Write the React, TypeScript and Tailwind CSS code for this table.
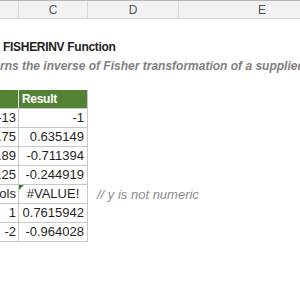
import React from "react";

const font = { fontFamily: '"Liberation Sans", Arial, sans-serif' };

const rows: { b: string; c: string; center?: boolean; err?: boolean; note?: string }[] = [
  { b: "-13", c: "-1" },
  { b: "0.75", c: "0.635149" },
  { b: "-0.89", c: "-0.711394" },
  { b: "-0.25", c: "-0.244919" },
  { b: "symbols", c: "#VALUE!", center: true, err: true, note: "// y is not numeric" },
  { b: "1", c: "0.7615942" },
  { b: "-2", c: "-0.964028" },
];

export default function App() {
  return (
    <div className="w-[300px] h-[300px] overflow-hidden bg-white text-[#1f1f1f]" style={font}>
      {/* column header */}
      <div className="flex h-[19px] bg-[#f2f2f2] border-t border-b border-t-[#b8b8b8] border-b-[#d4d4d4] box-border text-[12px] text-[#555]">
        <div className="w-[19px] shrink-0 border-r border-[#d9d9d9]" />
        <div className="w-[69px] shrink-0 border-r border-[#d9d9d9] flex items-center justify-center">C</div>
        <div className="w-[91px] shrink-0 border-r border-[#d9d9d9] flex items-center justify-center">D</div>
        <div className="w-[166px] shrink-0 flex items-center justify-center">E</div>
      </div>
      <div className="h-[18px]" />
      <div className="h-[19px] flex items-center pl-[3px] text-[12px] font-bold tracking-[-0.3px] whitespace-nowrap text-[#222]">
        FISHERINV Function
      </div>
      <div className="h-[19px] flex items-center text-[12px] font-bold italic whitespace-nowrap text-[#7f7f7f]">
        rns the inverse of Fisher transformation of a supplied value.
      </div>
      <div className="h-[15px]" />
      {/* table */}
      <div className="flex flex-col">
        <div className="flex h-[19px]">
          <div className="w-[19px] shrink-0 bg-[#548235] border-r border-b border-r-[#e8efe2] border-b-[#c8c8c8]" />
          <div className="w-[69px] shrink-0 bg-[#548235] border-r border-b border-[#c8c8c8] flex items-center pl-[3px] text-[12px] font-bold tracking-[-0.3px] text-white">
            Result
          </div>
        </div>
        {rows.map((r, i) => (
          <div key={i} className="flex h-[19px] text-[13px]">
            <div className="w-[19px] shrink-0 border-r border-b border-[#c8c8c8] flex items-center justify-end pr-[2px] overflow-hidden whitespace-nowrap">
              <span className="shrink-0">{r.b}</span>
            </div>
            <div
              className={
                "relative w-[69px] shrink-0 border-r border-b border-[#c8c8c8] flex items-center whitespace-nowrap " +
                (r.center ? "justify-center" : "justify-end pr-[3px]")
              }
            >
              {r.err && (
                <svg className="absolute left-0 top-0" width="5" height="5" viewBox="0 0 5 5">
                  <polygon points="0,0 5,0 0,5" fill="#2f8a2f" />
                </svg>
              )}
              {r.c}
            </div>
            {r.note && (
              <div className="flex items-center pl-[9px] italic text-[13px] text-[#8c8c8c] whitespace-nowrap">
                {r.note}
              </div>
            )}
          </div>
        ))}
      </div>
    </div>
  );
}
